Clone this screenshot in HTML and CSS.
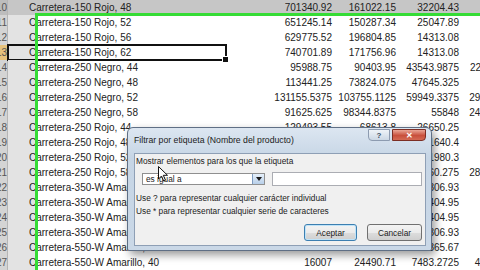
FILE: index.html
```html
<!DOCTYPE html>
<html lang="es">
<head>
  <meta charset="UTF-8">
  <title>Filtrar por etiqueta</title>
  <link rel="stylesheet" href="styles.css">
</head>
<body>

  <div class="sheet">
    <div class="row top"><span class="hdr">10</span><span class="lbl">Carretera-150 Rojo, 48</span><span class="num">701340.92</span><span class="num">161022.15</span><span class="num">32204.43</span><span class="num"></span></div>
    <div class="row"><span class="hdr">11</span><span class="lbl">Carretera-150 Rojo, 52</span><span class="num">651245.14</span><span class="num">150287.34</span><span class="num">25047.89</span><span class="num"></span></div>
    <div class="row"><span class="hdr">12</span><span class="lbl">Carretera-150 Rojo, 56</span><span class="num">629775.52</span><span class="num">196804.85</span><span class="num">14313.08</span><span class="num"></span></div>
    <div class="row current"><span class="hdr">13</span><span class="lbl">Carretera-150 Rojo, 62</span><span class="num">740701.89</span><span class="num">171756.96</span><span class="num">14313.08</span><span class="num"></span></div>
    <div class="row"><span class="hdr">14</span><span class="lbl">Carretera-250 Negro, 44</span><span class="num">95988.75</span><span class="num">90403.95</span><span class="num">43543.9875</span><span class="num">22756.1125</span></div>
    <div class="row"><span class="hdr">15</span><span class="lbl">Carretera-250 Negro, 48</span><span class="num">113441.25</span><span class="num">73824.075</span><span class="num">47645.325</span><span class="num"></span></div>
    <div class="row"><span class="hdr">16</span><span class="lbl">Carretera-250 Negro, 52</span><span class="num">131155.5375</span><span class="num">103755.1125</span><span class="num">59949.3375</span><span class="num">29413.7625</span></div>
    <div class="row"><span class="hdr">17</span><span class="lbl">Carretera-250 Negro, 58</span><span class="num">91625.625</span><span class="num">98344.8375</span><span class="num">55848</span><span class="num">24605.5125</span></div>
    <div class="row"><span class="hdr">18</span><span class="lbl">Carretera-250 Rojo, 44</span><span class="num">129493.55</span><span class="num">68613.8</span><span class="num">26650.25</span><span class="num"></span></div>
    <div class="row"><span class="hdr">19</span><span class="lbl">Carretera-250 Rojo, 48</span><span class="num">118932.4</span><span class="num">71298.6</span><span class="num">31640.4</span><span class="num"></span></div>
    <div class="row"><span class="hdr">20</span><span class="lbl">Carretera-250 Rojo, 52</span><span class="num">102874.7</span><span class="num">64215.35</span><span class="num">21980.3</span><span class="num"></span></div>
    <div class="row"><span class="hdr">21</span><span class="lbl">Carretera-250 Rojo, 58</span><span class="num">98765.125</span><span class="num">58823.4</span><span class="num">30660.275</span><span class="num">28347.9375</span></div>
    <div class="row"><span class="hdr">22</span><span class="lbl">Carretera-350-W Amarillo, 38</span><span class="num">80212.5</span><span class="num">43907.2</span><span class="num">12306.93</span><span class="num"></span></div>
    <div class="row"><span class="hdr">23</span><span class="lbl">Carretera-350-W Amarillo, 40</span><span class="num">76543.1</span><span class="num">40218.8</span><span class="num">10404.95</span><span class="num"></span></div>
    <div class="row"><span class="hdr">24</span><span class="lbl">Carretera-350-W Amarillo, 42</span><span class="num">74390.6</span><span class="num">39812.3</span><span class="num">10404.95</span><span class="num"></span></div>
    <div class="row"><span class="hdr">25</span><span class="lbl">Carretera-350-W Amarillo, 44</span><span class="num">79850.2</span><span class="num">42176.5</span><span class="num">12306.93</span><span class="num"></span></div>
    <div class="row"><span class="hdr">26</span><span class="lbl">Carretera-550-W Amarillo, 38</span><span class="num">17245.8</span><span class="num">25603.4</span><span class="num">7365.67</span><span class="num"></span></div>
    <div class="row"><span class="hdr">27</span><span class="lbl">Carretera-550-W Amarillo, 40</span><span class="num">16007</span><span class="num">24490.71</span><span class="num">7483.2725</span><span class="num">4352.6275</span></div>
  </div>

  <!-- green highlight drawn over the pivot table -->
  <div class="focus"></div>

  <div class="dialog">
    <div class="titlebar">
      <span class="title">Filtrar por etiqueta (Nombre del producto)</span>
      <div class="caption-btns">
        <span class="help">?</span>
        <span class="close">&#x2715;</span>
      </div>
    </div>
    <div class="client">
      <p class="prompt">Mostrar elementos para los que la etiqueta</p>
      <div class="criteria">
        <div class="combo">
          <span class="combo-text">es igual a</span>
          <span class="combo-arrow">
            <svg width="6" height="4" viewBox="0 0 6 4"><path d="M0 0h6L3 4z" fill="#1a1a1a"/></svg>
          </span>
        </div>
        <div class="input"></div>
      </div>
      <div class="hints">
        <p>Use ? para representar cualquier carácter individual</p>
        <p>Use * para representar cualquier serie de caracteres</p>
      </div>
      <div class="actions">
        <button class="btn ok">Aceptar</button>
        <button class="btn">Cancelar</button>
      </div>
    </div>
  </div>

  <svg class="cursor" width="10" height="16" viewBox="0 0 10 16">
    <path d="M0.5 0.5v12.5l3-3 2.2 5 1.8-0.8-2.2-4.9h4.2z" fill="#fff" stroke="#111" stroke-width="1"/>
  </svg>

</body>
</html>
```

FILE: styles.css
```css
* {
  margin: 0;
  padding: 0;
  box-sizing: border-box;
}
body {
  position: relative;
  width: 480px;
  height: 270px;
  overflow: hidden;
  background: #fff;
  font-family: 'Liberation Sans', Arial, sans-serif;
}

/* spreadsheet */
.row {
  display: grid;
  grid-template-columns: 8px 218px 109px 64px 63px 63px;
  height: 15px;
  line-height: 15px;
  font-size: 10px;
  color: #222;
  white-space: nowrap;
}
.hdr {
  overflow: hidden;
  direction: rtl;
  color: #555;
  background: #d4d4d4;
  border-right: 1px solid #b5b5b5;
}
.lbl {
  position: relative;
  padding-left: 21px;
  background: linear-gradient(to right, #e3e3e3 27px, transparent 27px);
}
.num {
  text-align: right;
  padding-right: 3px;
}
.row.top {
  background: #c6c6c6;
}
.row.top .lbl {
  background: none;
}
.row.top .hdr {
  background: #bdbdbd;
}
.row.current .hdr {
  background: #e6c27c;
}
.row.current .lbl {
  outline: 2px solid #111;
  outline-offset: -1px;
}
.row.current .lbl::after {
  content: "";
  position: absolute;
  right: -3px;
  bottom: -3px;
  width: 5px;
  height: 5px;
  background: #111;
  border: 1px solid #fff;
}

/* the box continues past the window on the right and bottom */
.focus {
  position: absolute;
  left: 35px;
  top: 13px;
  width: 445px;
  height: 257px;
  border-top: 3px solid #35dc35;
  border-left: 3px solid #35dc35;
}

/* dialog */
.dialog {
  position: absolute;
  left: 127px;
  top: 127px;
  width: 305px;
  height: 124px;
  display: flex;
  flex-direction: column;
  padding: 0 5px 4px 6px;
  border: 1px solid #5f6f85;
  border-radius: 6px 6px 2px 2px;
  background: linear-gradient(#dce6f1, #c6d5e5 30px, #cad8e7);
  box-shadow: 3px 4px 8px rgba(0, 0, 0, 0.4);
  color: #1b1b1b;
}
.titlebar {
  display: flex;
  align-items: flex-start;
  height: 25px;
}
.title {
  flex: 1;
  padding-top: 7px;
  font-size: 8.7px;
  line-height: 11px;
  white-space: nowrap;
}
.caption-btns {
  display: flex;
  gap: 2px;
  margin-top: 1px;
}
.help, .close {
  display: flex;
  justify-content: center;
  align-items: center;
  height: 12px;
  font-size: 8px;
  font-weight: bold;
}
.help {
  width: 22px;
  color: #3b4c63;
  background: linear-gradient(#eef3f8, #cbd7e4);
  border: 1px solid #8d9bb0;
  border-radius: 0 0 0 4px;
}
.close {
  width: 34px;
  color: #fff;
  background: linear-gradient(#eaa696, #c8503c 55%, #d46a54);
  border: 1px solid #7c2e24;
  border-radius: 0 0 4px 0;
}

.client {
  flex: 1;
  padding: 0 3px 0 1px;
  background: #f0f0f0;
  border: 1px solid #8e9fb5;
  font-size: 8.3px;
}
.prompt {
  margin-top: 2px;
  line-height: 11px;
}
.criteria {
  display: flex;
  align-items: center;
  gap: 7px;
  margin: 5px 0 0 6px;
}
.combo {
  display: flex;
  width: 123px;
  height: 12px;
  background: #fff;
  border: 1px solid #8f8f8f;
}
.combo-text {
  flex: 1;
  padding-left: 3px;
  line-height: 10px;
}
.combo-arrow {
  display: flex;
  justify-content: center;
  align-items: center;
  width: 12px;
  background: linear-gradient(#e6f0fa, #b8cfe9);
  border-left: 1px solid #7d9bc0;
}
.input {
  width: 150px;
  height: 14px;
  background: #fff;
  border: 1px solid #abadb3;
}
.hints {
  margin-top: 6px;
  line-height: 13px;
}
.actions {
  display: flex;
  justify-content: flex-end;
  gap: 10px;
  margin-top: 6px;
}
.btn {
  width: 55px;
  height: 17px;
  font-family: inherit;
  font-size: 8.3px;
  color: #1b1b1b;
  border: 1px solid #707070;
  border-radius: 3px;
  background: linear-gradient(#f3f3f3, #ebebeb 50%, #dddddd 51%, #cfcfcf);
}
.btn.ok {
  width: 53px;
  border-color: #3c7fb1;
  box-shadow: inset 0 0 0 1px #bfe3f8;
}

.cursor {
  position: absolute;
  left: 158px;
  top: 166px;
}
```
